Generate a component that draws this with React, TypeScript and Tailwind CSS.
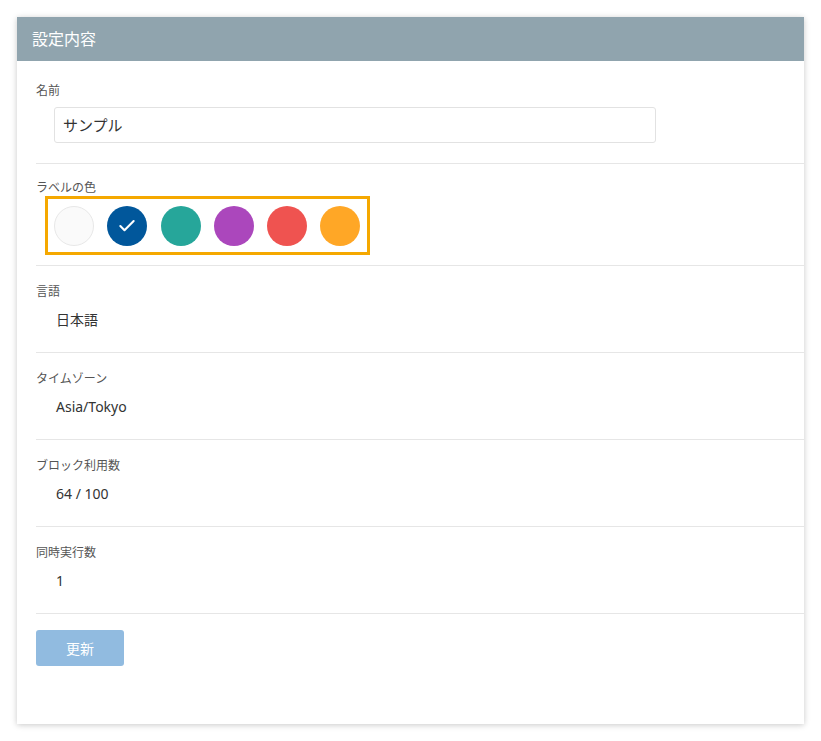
import { Check } from "lucide-react";

const font = { fontFamily: '"Noto Sans", "Noto Sans CJK JP", sans-serif' };

const colors = [
  { bg: "bg-[#fafafa] border border-[#e8e8e8]", selected: false },
  { bg: "bg-[#01579b]", selected: true },
  { bg: "bg-[#26a69a]", selected: false },
  { bg: "bg-[#ab47bc]", selected: false },
  { bg: "bg-[#ef5350]", selected: false },
  { bg: "bg-[#ffa726]", selected: false },
];

const rows = [
  { label: "言語", value: "日本語" },
  { label: "タイムゾーン", value: "Asia/Tokyo" },
  { label: "ブロック利用数", value: "64 / 100" },
  { label: "同時実行数", value: "1" },
];

export default function App() {
  return (
    <div className="min-h-screen bg-white p-[17px]" style={font}>
      <section className="h-[707px] bg-white shadow-[0_1px_6px_rgba(0,0,0,0.22)]">
        <div className="flex h-[44px] items-center bg-[#90a4ae] px-[15px] text-[16px] text-white">設定内容</div>

        <div className="pl-[19px]">
          {/* 名前 */}
          <div className="border-b border-[#e6e6e6] pt-[21px] pb-[20px]">
            <div className="text-[12px] leading-[18px] text-[#555]">名前</div>
            <div className="ml-[18px] mt-[7px] flex h-[36px] w-[602px] items-center rounded-[3px] border border-[#e2e2e2] px-[8px] text-[15px] text-[#333]">
              サンプル
            </div>
          </div>

          {/* ラベルの色 */}
          <div className="border-b border-[#e6e6e6] pt-[15px] pb-[10px]">
            <div className="text-[12px] leading-[17px] text-[#555]">ラベルの色</div>
            <div className="ml-[9px] flex h-[59px] w-[325px] items-center gap-[13.3px] border-[3px] border-[#f5a800] px-[6px]">
              {colors.map((c, i) => (
                <div key={i} className={`flex h-[40px] w-[40px] items-center justify-center rounded-full ${c.bg}`}>
                  {c.selected && <Check className="h-[20px] w-[20px] text-white" strokeWidth={2.5} />}
                </div>
              ))}
            </div>
          </div>

          {rows.map((r) => (
            <div key={r.label} className="border-b border-[#e6e6e6] pt-[17px] pb-[20px]">
              <div className="text-[12px] leading-[18px] text-[#555]">{r.label}</div>
              <div className="ml-[20px] mt-[7px] text-[14px] leading-[24px] text-[#333]">{r.value}</div>
            </div>
          ))}

          <button className="mt-[16px] h-[36px] w-[88px] rounded-[3px] bg-[#91bbe0] text-[14px] text-white">更新</button>
        </div>
      </section>
    </div>
  );
}
